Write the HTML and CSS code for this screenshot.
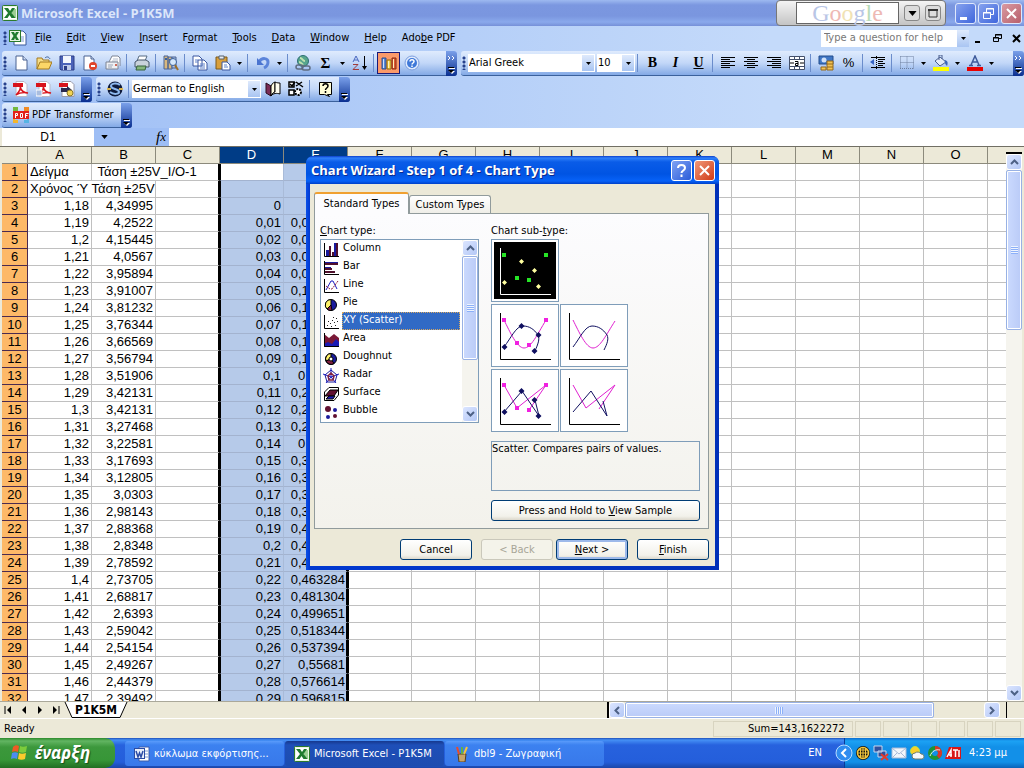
FILE: index.html
```html
<!DOCTYPE html>
<html lang="en">
<head>
    <meta charset="UTF-8">
    <meta name="viewport" content="width=device-width, initial-scale=1.0">
    <title>Microsoft Excel - P1K5M</title>
    <link rel="stylesheet" href="styles.css">
</head>
<body>

<svg class="defs" aria-hidden="true">
    <symbol id="excel" viewBox="0 0 16 16">
        <rect x=".5" y=".5" width="15" height="15" rx="1" fill="#e9f6e4" stroke="#2c7a2c"/>
        <path d="M2 2h12v12H2z" fill="#fff"/>
        <path d="M10 4h4v9h-4z" fill="#9ccf94"/>
        <path d="M2 3h4l2 3 2-3h3L9.500 8l4 5H9.500L7.500 10l-2 3H2l4-5z" fill="#1f7a2e"/>
    </symbol>
    <symbol id="arrow" viewBox="0 0 5 3"><path d="M0 0h5L2.500 3z" fill="#000"/></symbol>
    <symbol id="cap" viewBox="0 0 11 24">
        <path d="M3 16.500h6" stroke="#fff"/><path d="M3 19h6l-3 3z" fill="#fff"/>
        <path d="M2 15.500h6" stroke="#000"/><path d="M2 18h6l-3 3z" fill="#000"/>
    </symbol>
    <symbol id="chevrons" viewBox="0 0 11 6"><path d="M2 1l2 2-2 2M6 1l2 2-2 2" fill="none" stroke="#fff"/></symbol>
    <symbol id="up" viewBox="0 0 9 6"><path d="M1 5l3.500-3.500L8 5" fill="none" stroke="#4d6185" stroke-width="2"/></symbol>
    <symbol id="down" viewBox="0 0 9 6"><path d="M1 1l3.500 3.500L8 1" fill="none" stroke="#4d6185" stroke-width="2"/></symbol>
    <symbol id="left" viewBox="0 0 6 9"><path d="M5 1L1.500 4.500 5 8" fill="none" stroke="#4d6185" stroke-width="2"/></symbol>
    <symbol id="right" viewBox="0 0 6 9"><path d="M1 1l3.500 3.500L1 8" fill="none" stroke="#4d6185" stroke-width="2"/></symbol>
    <symbol id="pdf" viewBox="0 0 16 16">
        <path d="M3 .5h8l3 3v12H3z" fill="#fff" stroke="#b9b9c6"/>
        <path d="M0 2h10v4H0z" fill="#d8141c"/>
        <path d="M3 14c3-3 5-7 4-9 1 5 4 7 8 7-5-1-9 0-12 2z" fill="none" stroke="#d8141c" stroke-width="1.500"/>
    </symbol>
</svg>

<header class="titlebar">
    <svg class="ico"><use href="#excel"/></svg>
    <h1>Microsoft Excel - P1K5M</h1>
    <div class="google">
        <span class="google-logo"><b class="g-blue">G</b><b class="g-red">o</b><b class="g-gold">o</b><b class="g-blue">g</b><b class="g-green">l</b><b class="g-red">e</b></span>
        <button type="button" aria-label="Options"><svg width="9" height="5" viewBox="0 0 5 3"><use href="#arrow"/></svg></button>
        <button type="button" aria-label="Expand"><svg width="10" height="10"><path d="M1 2h8v7H1z" fill="none" stroke="#333"/><path d="M0 1h10v2H0z" fill="#333"/></svg></button>
    </div>
    <div class="win-buttons">
        <button type="button" class="win" aria-label="Minimize"><svg width="19" height="19"><path d="M4 13h7v3H4z" fill="#fff"/></svg></button>
        <button type="button" class="win" aria-label="Restore"><svg width="19" height="19"><path d="M7.500 8V4.500h7v6H12M4.500 8.500h7v6h-7zM7 5h8M4 9h8" fill="none" stroke="#fff"/></svg></button>
        <button type="button" class="win close" aria-label="Close"><svg width="19" height="19"><path d="M5 5l9 9M14 5l-9 9" stroke="#fff" stroke-width="2"/></svg></button>
    </div>
</header>

<nav class="menubar">
    <span class="grip"></span>
    <svg class="doc-ico" viewBox="0 0 18 16"><path d="M5 1h9l3 3v11H5z" fill="#fff" stroke="#38599c"/><path d="M11 7h4M11 9h4M11 11h4" stroke="#7f9bd0"/><rect x=".5" y=".5" width="11" height="11" fill="#e9f6e4" stroke="#2c7a2c"/><path d="M2 2h3l1 2 1-2h3L7.500 6 10 10H7L6 8l-1 2H2l2.500-4z" fill="#1f7a2e"/></svg>
    <a href="#"><u>F</u>ile</a>
    <a href="#"><u>E</u>dit</a>
    <a href="#"><u>V</u>iew</a>
    <a href="#"><u>I</u>nsert</a>
    <a href="#">F<u>o</u>rmat</a>
    <a href="#"><u>T</u>ools</a>
    <a href="#"><u>D</u>ata</a>
    <a href="#"><u>W</u>indow</a>
    <a href="#"><u>H</u>elp</a>
    <a href="#">Ado<u>b</u>e PDF</a>
    <div class="ask">
        <input type="text" aria-label="Help question" placeholder="Type a question for help">
        <button type="button" class="drop" aria-label="Recent questions"><svg class="arr"><use href="#arrow"/></svg></button>
    </div>
    <div class="doc-buttons">
        <button type="button" aria-label="Minimize workbook"><svg width="9" height="9"><path d="M1 7h5v2H1z"/></svg></button>
        <button type="button" aria-label="Restore workbook"><svg width="9" height="9"><path d="M2.500 3V.5h6v4H6M.5 3.500h5v4h-5zM2 1h7M0 4h6" fill="none" stroke="#000"/></svg></button>
        <button type="button" aria-label="Close workbook"><svg width="9" height="9"><path d="M1 1l7 7M8 1L1 8" stroke="#000" stroke-width="2"/></svg></button>
    </div>
</nav>

<div class="toolbars">
    <div class="bar-row">
        <div class="bar">
            <span class="grip"></span>
            <button type="button" class="tb" aria-label="New"><svg class="ico" viewBox="0 0 16 16"><path d="M3 1h7l4 4v10H3z" fill="#fff" stroke="#4a6392"/><path d="M10 1v4h4" fill="#cfdcf3" stroke="#4a6392"/></svg></button>
            <button type="button" class="tb" aria-label="Open"><svg class="ico" viewBox="0 0 16 16"><path d="M1 3h5l1 2h6v3H5l-4 6z" fill="#f5dd88" stroke="#a47a20"/><path d="M4 7h12l-3 7H1z" fill="#fbd667" stroke="#a47a20"/><path d="M9 3c2-2 4-1 5 1" fill="none" stroke="#3b619c"/></svg></button>
            <button type="button" class="tb" aria-label="Save"><svg class="ico" viewBox="0 0 16 16"><path d="M1 1h14v14H2l-1-1z" fill="#4b62b8" stroke="#2c3c86"/><path d="M4 1h8v7H4z" fill="#f3f6fd"/><path d="M4 10h8v5H4z" fill="#c0cbe8"/><path d="M5 11h3v4H5z" fill="#2c3c86"/></svg></button>
            <button type="button" class="tb" aria-label="Permission"><svg class="ico" viewBox="0 0 16 16"><path d="M2 1h7l3 3v11H2z" fill="#fff" stroke="#4a6392"/><path d="M9 1v3h3" fill="#cfdcf3" stroke="#4a6392"/><circle cx="11" cy="11" r="4" fill="#e0442a"/><path d="M9 11h4" stroke="#fff" stroke-width="2"/></svg></button>
            <button type="button" class="tb" aria-label="E-mail"><svg class="ico" viewBox="0 0 16 16"><path d="M4 7l3-6h6l2 2v8" fill="#fff" stroke="#7c8494"/><path d="M8 4h5M7 6h6" stroke="#b4bccb"/><path d="M1 7h12v7H1z" fill="#eef0f4" stroke="#7c8494"/><path d="M3 10h5M3 12h4" stroke="#9aa3b4"/><path d="M10 9h2v2h-2z" fill="#d06a5a"/></svg></button>
            <span class="sep"></span>
            <button type="button" class="tb" aria-label="Print"><svg class="ico" viewBox="0 0 16 16"><path d="M5 1h8l-2 5H3z" fill="#fff" stroke="#586d84"/><path d="M1 7l3-2h8l3 2v5H1z" fill="#c9d2dc" stroke="#47566b"/><path d="M3 11h9l-1 4H2z" fill="#85b67c" stroke="#37623d"/></svg></button>
            <span class="sep"></span>
            <button type="button" class="tb" aria-label="Research"><svg class="ico" viewBox="0 0 16 16"><path d="M1 1h4v13H1zM5 2h4v12H5z" fill="#d9b87e" stroke="#4a6392"/><path d="M9 2h4v11H9z" fill="#a9c0e6" stroke="#4a6392"/><path d="M2 4h2M6 5h2" stroke="#3b619c" stroke-width="2"/><circle cx="10" cy="7" r="3.500" fill="#d5e8fb" stroke="#3b619c"/><path d="M12 10l3 5" stroke="#9c6f29" stroke-width="2"/></svg></button>
            <span class="sep"></span>
            <button type="button" class="tb" aria-label="Copy"><svg class="ico" viewBox="0 0 16 16"><path d="M1 1h6l3 3v7H1zM6 5h6l3 3v7H6z" fill="#fff" stroke="#3b57a0"/><path d="M3 5h3M3 7h3M8 9h5M8 11h5M8 13h5" stroke="#5e80c8"/></svg></button>
            <button type="button" class="tb" aria-label="Paste"><svg class="ico" viewBox="0 0 16 16"><path d="M1 2h11v12H1z" fill="#d99f3b" stroke="#7c5a1d"/><path d="M4 1h5v3H4z" fill="#e9edf3" stroke="#55606f"/><path d="M7 7h5l3 3v5H7z" fill="#fff" stroke="#3b57a0"/><path d="M9 10h3M9 12h4" stroke="#5e80c8"/></svg></button>
            <button type="button" class="more" aria-label="Paste options"><svg class="arr"><use href="#arrow"/></svg></button>
            <span class="sep"></span>
            <button type="button" class="tb" aria-label="Undo"><svg class="ico" viewBox="0 0 16 16"><path d="M4 7c3-5 9-4 9 0 0 3-2 5-4 6" fill="none" stroke="#5b84da" stroke-width="3"/><path d="M2 3v7h7z" fill="#4a74d0"/></svg></button>
            <button type="button" class="more" aria-label="Undo list"><svg class="arr"><use href="#arrow"/></svg></button>
            <span class="sep"></span>
            <button type="button" class="tb" aria-label="Hyperlink"><svg class="ico" viewBox="0 0 16 16"><circle cx="8" cy="6" r="5.500" fill="#57a58c" stroke="#2d6f72"/><path d="M5 3c3 0 2 3 5 3M4 7c2 0 3 2 4 3" fill="none" stroke="#bfe2b0" stroke-width="2"/><rect x="1" y="10" width="7" height="4" rx="2" fill="none" stroke="#5f6c80" stroke-width="1.500"/><rect x="7" y="11" width="8" height="4" rx="2" fill="none" stroke="#5f6c80" stroke-width="1.500"/></svg></button>
            <button type="button" class="tb sigma" aria-label="AutoSum">Σ</button>
            <button type="button" class="more" aria-label="AutoSum list"><svg class="arr"><use href="#arrow"/></svg></button>
            <button type="button" class="tb" aria-label="Sort ascending"><svg class="ico" viewBox="0 0 16 16"><path d="M1 7l3-6 3 6M2 5h4" fill="none" stroke="#4a68c0"/><path d="M1 9.500h5l-5 5h6" fill="none" stroke="#a03a3a"/><path d="M12.500 1v11" stroke="#000"/><path d="M10 11h5l-2.500 4z"/></svg></button>
            <span class="sep"></span>
            <button type="button" class="tb pressed" aria-label="Chart Wizard"><svg class="ico" viewBox="0 0 16 16"><path d="M1 3h4v11H1z" fill="#5b89d8" stroke="#2d4d8f"/><path d="M2 4h1v9H2z" fill="#cfe0fa"/><path d="M6 5h4v9H6z" fill="#f8d34c" stroke="#8e6b12"/><path d="M11 3h4v11h-4z" fill="#df5a32" stroke="#862a12"/><path d="M7 6h1v7H7zM12 4h1v9h-1z" fill="#fdf0b8"/></svg></button>
            <button type="button" class="tb" aria-label="Help"><svg class="ico" viewBox="0 0 16 16"><circle cx="8" cy="8" r="7" fill="#dfeafd" stroke="#7c9ede"/><circle cx="8" cy="8" r="5" fill="#3f78d8"/><path d="M6 6.500c0-2.500 4-2.500 4 0 0 1.500-2 1.500-2 3M8 10.500v1.500" fill="none" stroke="#fff" stroke-width="1.500"/></svg></button>
            <button type="button" class="cap far" aria-label="Toolbar options"><svg class="cap-top"><use href="#chevrons"/></svg><svg class="cap-ico"><use href="#cap"/></svg></button>
        </div>
        <div class="bar grow">
            <span class="grip"></span>
            <div class="combo font-name"><input type="text" aria-label="Font" value="Arial Greek"><button type="button" class="drop" aria-label="Fonts"><svg class="arr"><use href="#arrow"/></svg></button></div>
            <div class="combo font-size"><input type="text" aria-label="Font size" value="10"><button type="button" class="drop" aria-label="Sizes"><svg class="arr"><use href="#arrow"/></svg></button></div>
            <span class="sep"></span>
            <button type="button" class="tb serif">B</button>
            <button type="button" class="tb serif"><i>I</i></button>
            <button type="button" class="tb serif"><u>U</u></button>
            <span class="sep"></span>
            <button type="button" class="tb" aria-label="Align left"><svg class="ico" viewBox="0 0 16 16"><path d="M1 2.500h14M1 4.500h9M1 6.500h14M1 8.500h9M1 10.500h14M1 12.500h9" stroke="#000"/></svg></button>
            <button type="button" class="tb" aria-label="Center"><svg class="ico" viewBox="0 0 16 16"><path d="M1 2.500h14M4 4.500h8M1 6.500h14M4 8.500h8M1 10.500h14M4 12.500h8" stroke="#000"/></svg></button>
            <button type="button" class="tb" aria-label="Align right"><svg class="ico" viewBox="0 0 16 16"><path d="M1 2.500h14M6 4.500h9M1 6.500h14M6 8.500h9M1 10.500h14M6 12.500h9" stroke="#000"/></svg></button>
            <button type="button" class="tb" aria-label="Merge and center"><svg class="ico" viewBox="0 0 16 16"><path d="M.5 1.500h15v13H.5zM.5 4.500h15M.5 11.500h15M5.500 1.500v3M10.500 1.500v3M5.500 11.500v3M10.500 11.500v3" fill="#fff" stroke="#44506b"/><path d="M1 8h4M15 8h-4" stroke="#000"/><path d="M6 6.500h3v4H6.500v-2H9" fill="none" stroke="#000"/></svg></button>
            <span class="sep"></span>
            <button type="button" class="tb" aria-label="Currency"><svg class="ico" viewBox="0 0 16 16"><path d="M1 1h14v8H1z" fill="#3f76c4" stroke="#234d8d"/><circle cx="6" cy="5" r="2.500" fill="#cfe0f8"/><path d="M9 6h6v9H9z" fill="#f3c352" stroke="#94681a"/><path d="M9 9h6M9 12h6" stroke="#94681a"/><path d="M3 12h5v3H3z" fill="#f3c352" stroke="#94681a"/></svg></button>
            <button type="button" class="tb percent" aria-label="Percent">%</button>
            <span class="sep"></span>
            <button type="button" class="tb" aria-label="Increase indent"><svg class="ico" viewBox="0 0 16 16"><path d="M1 2.500h14M8 4.500h7M8 6.500h5M8 8.500h7M8 10.500h5M1 12.500h14" stroke="#000"/><path d="M6.500 1v14" stroke="#000" stroke-dasharray="1 1"/><path d="M4 4v6L0 7z" fill="#3563c4"/></svg></button>
            <span class="sep"></span>
            <button type="button" class="tb" aria-label="Borders"><svg class="ico" viewBox="0 0 16 16"><path d="M1.500 1.500h13v12M1.500 1.500v12M8 1.500v12M1.500 7.500h13" fill="none" stroke="#6d7f9e" stroke-dasharray="1 1"/><path d="M1 13.500h14" stroke="#6d7f9e" stroke-dasharray="1 1"/></svg></button>
            <button type="button" class="more" aria-label="Border styles"><svg class="arr"><use href="#arrow"/></svg></button>
            <button type="button" class="tb" aria-label="Fill color"><svg class="ico" viewBox="0 0 16 16"><path d="M2 6l5-4 6 5-6 4z" fill="#e3ebf8" stroke="#4a5f8f"/><path d="M6 5V0h3v4" fill="none" stroke="#4a5f8f"/><path d="M12 5c3 1 3 3 2 6-1-1-3-3-2-6z" fill="#3d66b9"/><path d="M0 12h16v4H0z" fill="#ff0"/></svg></button>
            <button type="button" class="more" aria-label="Fill colors"><svg class="arr"><use href="#arrow"/></svg></button>
            <button type="button" class="tb" aria-label="Font color"><svg class="ico" viewBox="0 0 16 16"><path d="M4 10L8 1l4 9M5 7h6M2 10.500h4M10 10.500h4" fill="none" stroke="#3e5a9a" stroke-width="1.500"/><path d="M0 12h16v4H0z" fill="#e80000"/></svg></button>
            <button type="button" class="more" aria-label="Font colors"><svg class="arr"><use href="#arrow"/></svg></button>
            <button type="button" class="cap end" aria-label="Toolbar options"><svg class="cap-top"><use href="#chevrons"/></svg><svg class="cap-ico"><use href="#cap"/></svg></button>
        </div>
    </div>
    <div class="bar-row">
        <div class="bar">
            <span class="grip"></span>
            <button type="button" class="tb" aria-label="Convert to PDF"><svg class="ico"><use href="#pdf"/></svg></button>
            <button type="button" class="tb" aria-label="Convert and e-mail"><svg class="ico" viewBox="0 0 16 16"><use href="#pdf"/><path d="M0 9h6v6H0z" fill="#a9bddf" stroke="#fff"/></svg></button>
            <button type="button" class="tb" aria-label="Convert and review"><svg class="ico" viewBox="0 0 16 16"><path d="M3 .5h9l3 3v12H3z" fill="#fff" stroke="#9a9aa8"/><path d="M0 2h9v4H0z" fill="#d8141c"/><path d="M2 7h6V5l5 4-5 4v-2H2z" fill="#29294e"/><circle cx="11" cy="12" r="3" fill="#f3d455" stroke="#8a7a2a"/></svg></button>
            <button type="button" class="cap near" aria-label="Toolbar options"><svg class="cap-ico"><use href="#cap"/></svg></button>
        </div>
        <div class="bar">
            <span class="grip"></span>
            <button type="button" class="tb" aria-label="Translate"><svg class="ico" viewBox="0 0 16 16"><circle cx="8" cy="8" r="7.500" fill="#0d1a3c"/><path d="M13 4c-4-3-9-1-9 1 0 4 8 2 8 6 0 2-5 3-9 0" fill="none" stroke="#8db8ee" stroke-width="2"/><path d="M0 8h4M12 8h4" stroke="#d9b34c" stroke-width="2"/></svg></button>
            <span class="sep"></span>
            <div class="combo language"><input type="text" aria-label="Direction" value="German to English"><button type="button" class="drop" aria-label="Directions"><svg class="arr"><use href="#arrow"/></svg></button></div>
            <button type="button" class="tb" aria-label="Dictionary"><svg class="ico" viewBox="0 0 16 16"><path d="M1 2l5 3v10l-5-3z" fill="#7a2c55" stroke="#2a0d20"/><path d="M6 5c1-3 4-4 4-4v10s-3 1-4 4z" fill="#fffce0" stroke="#000"/><path d="M10 1c2 1 4 1 5 1v11c-3-1-7-1-9 2 1-3 4-4 4-4z" fill="#fffef0" stroke="#000"/></svg></button>
            <button type="button" class="tb" aria-label="Options"><svg class="ico" viewBox="0 0 16 16"><path d="M1 1h5v5H1zM1 9h5v5H1z" fill="#fff" stroke="#000" stroke-width="1.500"/><path d="M2 3l2 2 3-4M8 5l6-4M8 1l7 5" fill="none" stroke="#000" stroke-width="1.500"/><circle cx="10" cy="11" r="3" fill="#fff" stroke="#000" stroke-width="2" stroke-dasharray="2 1"/></svg></button>
            <span class="sep"></span>
            <button type="button" class="tb" aria-label="Context help"><svg class="ico" viewBox="0 0 16 16"><path d="M2.500 1.500h12v12h-4l2 2-5-2h-5z" fill="#fffdd6" stroke="#000"/><path d="M6 5c0-3 5-3 5 0 0 2-2.500 2-2.500 4M8.500 10v2" fill="none" stroke="#000" stroke-width="1.500"/></svg></button>
            <button type="button" class="cap near" aria-label="Toolbar options"><svg class="cap-ico"><use href="#cap"/></svg></button>
        </div>
    </div>
    <div class="bar-row">
        <div class="bar">
            <span class="grip"></span>
            <button type="button" class="tb-text"><svg class="ico" viewBox="0 0 16 16"><path d="M0 0h5v4H2v2H0z" fill="#74b83c"/><path d="M11 0h5v6h-2V4h-3z" fill="#f08a24"/><path d="M0 11h2v2h3v3H0z" fill="#f3b52c"/><path d="M14 11h2v5h-5v-3h3z" fill="#56b4e4"/><rect y="4" width="16" height="8" fill="#e32119"/><path d="M2.500 11V6.500h2v2h-2M7.500 6.500v4h2v-4zM12.500 11V6.500h3M12.500 8.500h2" fill="none" stroke="#fff"/></svg>PDF Transformer</button>
            <button type="button" class="cap near" aria-label="Toolbar options"><svg class="cap-ico"><use href="#cap"/></svg></button>
        </div>
    </div>
</div>

<div class="formula-bar">
    <input type="text" class="name-box" aria-label="Name box" value="D1">
    <button type="button" class="name-drop" aria-label="Names"><svg width="7" height="4" viewBox="0 0 5 3"><use href="#arrow"/></svg></button>
    <button type="button" class="fx" aria-label="Insert function">f<small>x</small></button>
    <input type="text" class="formula" aria-label="Formula">
</div>

<main class="workspace">
    <div class="sheet" id="sheet">
        <table id="grid"></table>
    </div>
    <div class="vscroll">
        <span class="split"></span>
        <button type="button" class="sb" aria-label="Scroll up"><svg width="9" height="6"><use href="#up"/></svg></button>
        <div class="track"><div class="thumb"></div></div>
        <button type="button" class="sb" aria-label="Scroll down"><svg width="9" height="6"><use href="#down"/></svg></button>
    </div>

    <section class="dialog" role="dialog" aria-labelledby="wizard-title">
        <div class="dialog-title">
            <h2 id="wizard-title">Chart Wizard - Step 1 of 4 - Chart Type</h2>
            <button type="button" class="dlg-btn" aria-label="Help"><svg width="19" height="19"><path d="M6 7c0-4 7-4 7 0 0 2.500-3.500 2.500-3.500 5M9.500 13.500v2.500" fill="none" stroke="#fff" stroke-width="2"/></svg></button>
            <button type="button" class="dlg-btn red" aria-label="Close"><svg width="19" height="19"><path d="M5 5l9 9M14 5l-9 9" stroke="#fff" stroke-width="2"/></svg></button>
        </div>
        <div class="dialog-body">
            <div class="tabs" role="tablist">
                <button type="button" class="tab active" role="tab">Standard Types</button>
                <button type="button" class="tab" role="tab">Custom Types</button>
            </div>
            <div class="panel">
                <div class="col-types">
                    <p class="caption"><u>C</u>hart type:</p>
                    <div class="listbox">
                        <div class="types">
                            <label><input type="radio" name="type"><svg class="ico" viewBox="0 0 16 16"><path d="M1.500 1v13.500H16" fill="none" stroke="#000"/><path d="M3 8h3v6H3zM11 1h2v13h-2z" fill="#1a1a9c"/><path d="M6 4h2v10H6zM9 10h2v4H9zM13 1h2v13h-2z" fill="#50102c"/></svg><span>Column</span></label>
                            <label><input type="radio" name="type"><svg class="ico" viewBox="0 0 16 16"><path d="M1.500 1v13.500H16" fill="none" stroke="#000"/><path d="M2 2h13v2H2zM2 7h6v2H2zM2 11h9v1H2z" fill="#1a1a9c"/><path d="M2 3h13v2H2zM2 8h7v2H2zM2 11h10v2H2z" fill="#50102c"/></svg><span>Bar</span></label>
                            <label><input type="radio" name="type"><svg class="ico" viewBox="0 0 16 16"><path d="M1.500 1v13.500H16" fill="none" stroke="#000"/><path d="M3 12l5-9h2l4 8" fill="none" stroke="#1a1ac0"/><path d="M3 8l4 3h2l6-8" fill="none" stroke="#902040" stroke-dasharray="2 1"/></svg><span>Line</span></label>
                            <label><input type="radio" name="type"><svg class="ico" viewBox="0 0 16 16"><circle cx="8" cy="9" r="5.500" fill="#1a1a9c" stroke="#000"/><path d="M8 9V3.500A5.500 5.500 0 0 0 4 13z" fill="#fff36a" stroke="#000"/><path d="M8 9l-4 4a5.500 5.500 0 0 0 5 1.500z" fill="#802040" stroke="#000"/></svg><span>Pie</span></label>
                            <label><input type="radio" name="type" checked><svg class="ico" viewBox="0 0 16 16"><path d="M1.500 1v13.500H16" fill="none" stroke="#000"/><path d="M4 11.500h1M5 7.500h1M7 9.500h1M9 6.500h1M11 8.500h1M13 4.500h1M8 12.500h1M12 11.500h1M14 7.500h1M10 3.500h1" stroke="#222"/></svg><span>XY (Scatter)</span></label>
                            <label><input type="radio" name="type"><svg class="ico" viewBox="0 0 16 16"><path d="M1 2l5 4 5-4 5 4v9H1z" fill="#7a1836"/><path d="M1 12l4-2 4 2 4-5 3 3v5H1z" fill="#1a1ab4"/><path d="M1.500 1v13.500H16" fill="none" stroke="#000"/></svg><span>Area</span></label>
                            <label><input type="radio" name="type"><svg class="ico" viewBox="0 0 16 16"><circle cx="8" cy="9" r="5.500" fill="#1a1a9c" stroke="#000"/><path d="M8 9V3.500A5.500 5.500 0 0 0 3 11z" fill="#fff36a" stroke="#000"/><path d="M8 9l-5 2a5.500 5.500 0 0 0 8 2.500z" fill="#802040" stroke="#000"/><circle cx="8" cy="9" r="2" fill="#fff" stroke="#000"/></svg><span>Doughnut</span></label>
                            <label><input type="radio" name="type"><svg class="ico" viewBox="0 0 16 16"><path d="M8 2l6 5-2 7H4L2 7z" fill="#fff" stroke="#1a1a9c"/><path d="M8 0v9l8-3M8 9l5 6M8 9l-5 6M8 9L0 6" fill="none" stroke="#1a1ac0"/><path d="M8 5l3 3-1 4H6L5 8z" fill="none" stroke="#802040" stroke-width="1.500"/></svg><span>Radar</span></label>
                            <label><input type="radio" name="type"><svg class="ico" viewBox="0 0 16 16"><path d="M1.500 6L6 1.500h9.500V9L11 14.500H1.500z" fill="#fff" stroke="#000"/><path d="M2 10l5-6 8 0-4 6z" fill="#601030" stroke="#000"/><path d="M3 13l3-3h6l-2 3z" fill="#1a1ab4" stroke="#000"/></svg><span>Surface</span></label>
                            <label><input type="radio" name="type"><svg class="ico" viewBox="0 0 16 16"><circle cx="5" cy="5" r="3" fill="#601030"/><circle cx="12" cy="6" r="2" fill="#1a1a9c"/><circle cx="5" cy="13" r="2" fill="#1a1a9c"/><circle cx="12" cy="12" r="2" fill="#601030"/></svg><span>Bubble</span></label>
                        </div>
                        <div class="list-scroll">
                            <button type="button" class="sb" aria-label="Scroll up"><svg width="9" height="6"><use href="#up"/></svg></button>
                            <div class="track"><div class="thumb"></div></div>
                            <button type="button" class="sb" aria-label="Scroll down"><svg width="9" height="6"><use href="#down"/></svg></button>
                        </div>
                    </div>
                </div>
                <div class="col-sub">
                    <p class="caption">Chart sub-<u>t</u>ype:</p>
                    <div class="subtypes">
                        <label class="wide"><input type="radio" name="subtype" checked aria-label="Scatter"><svg viewBox="0 0 66 61"><path d="M2 2h62v57H2z" fill="#000"/><path d="M8.500 8v46.500H59" fill="none" stroke="#fff"/><path d="M10 13h4v4h-4zM52 13h4v4h-4zM23 36h4v4h-4zM35 38h4v4h-4z" fill="#26e426"/><path d="M29.500 19l2.500 2.500-2.500 2.500-2.500-2.500zM42.500 28l2.500 2.500-2.500 2.500-2.500-2.500zM12.500 40l2.500 2.500-2.500 2.500-2.500-2.500zM46.500 44l2.500 2.500-2.500 2.500-2.500-2.500z" fill="#ffffa0"/></svg></label>
                        <label><input type="radio" name="subtype" aria-label="Smoothed lines with markers"><svg viewBox="0 0 66 61"><path d="M8.500 8v46.500H59" fill="none" stroke="#000"/><path d="M12 15C18 27 25 43 32 43S45 30 54 15" fill="none" stroke="#e020d0"/><path d="M12 42c7-9 12-21 19-21 6 0 11 3 15 9 2 4 0 9-3 16" fill="none" stroke="#101060"/><path d="M10 13h4v4h-4zM52 13h4v4h-4zM23 36h4v4h-4zM35 38h4v4h-4z" fill="#f020e0"/><path d="M29.500 18l3 3-3 3-3-3zM46.500 27l3 3-3 3-3-3zM12.500 39l3 3-3 3-3-3zM42.500 43l3 3-3 3-3-3z" fill="#101060"/></svg></label>
                        <label><input type="radio" name="subtype" aria-label="Smoothed lines"><svg viewBox="0 0 66 61"><path d="M8.500 8v46.500H59" fill="none" stroke="#000"/><path d="M12 15C18 27 25 43 32 43S45 30 54 16" fill="none" stroke="#e020d0"/><path d="M12 42c7-9 12-21 19-21 6 0 11 3 15 9 2 4 0 9-3 15" fill="none" stroke="#101060"/></svg></label>
                        <label><input type="radio" name="subtype" aria-label="Straight lines with markers"><svg viewBox="0 0 66 61"><path d="M8.500 8v46.500H59" fill="none" stroke="#000"/><path d="M12 15l13 23 29-23-17 25" fill="none" stroke="#e020d0"/><path d="M12 42l18-21 17 25-4-16" fill="none" stroke="#101060"/><path d="M10 13h4v4h-4zM52 13h4v4h-4zM23 36h4v4h-4zM35 38h4v4h-4z" fill="#f020e0"/><path d="M29.500 18l3 3-3 3-3-3zM42.500 27l3 3-3 3-3-3zM12.500 39l3 3-3 3-3-3zM46.500 43l3 3-3 3-3-3z" fill="#101060"/></svg></label>
                        <label><input type="radio" name="subtype" aria-label="Straight lines"><svg viewBox="0 0 66 61"><path d="M8.500 8v46.500H59" fill="none" stroke="#000"/><path d="M12 15l13 23 29-23-16 24" fill="none" stroke="#e020d0"/><path d="M12 42l18-21 16 25-4-15" fill="none" stroke="#101060"/></svg></label>
                    </div>
                    <p class="description">Scatter. Compares pairs of values.</p>
                    <button type="button" class="btn full"><span>Press and Hold to <u>V</u>iew Sample</span></button>
                </div>
            </div>
            <div class="actions">
                <button type="button" class="btn">Cancel</button>
                <button type="button" class="btn back" disabled>&lt; Back</button>
                <button type="button" class="btn default"><span><u>N</u>ext &gt;</span></button>
                <button type="button" class="btn"><span><u>F</u>inish</span></button>
            </div>
        </div>
    </section>
</main>

<div class="sheet-tabs">
    <div class="tab-side">
        <button type="button" class="nav" aria-label="First sheet"><svg width="8" height="8"><path d="M1 0v8" stroke="#000"/><path d="M7 0v8L3 4z"/></svg></button>
        <button type="button" class="nav" aria-label="Previous sheet"><svg width="8" height="8"><path d="M6 0v8L2 4z"/></svg></button>
        <button type="button" class="nav" aria-label="Next sheet"><svg width="8" height="8"><path d="M2 0v8l4-4z"/></svg></button>
        <button type="button" class="nav" aria-label="Last sheet"><svg width="8" height="8"><path d="M7 0v8" stroke="#000"/><path d="M1 0v8l4-4z"/></svg></button>
        <button type="button" class="sheet-tab"><svg width="64" height="16"><path d="M1 0l7 15.500h48L63 0" fill="#fff" stroke="#000"/></svg><span>P1K5M</span></button>
    </div>
    <div class="hscroll">
        <button type="button" class="sb" aria-label="Scroll left"><svg width="6" height="9"><use href="#left"/></svg></button>
        <div class="track"><div class="thumb"></div></div>
        <button type="button" class="sb" aria-label="Scroll right"><svg width="6" height="9"><use href="#right"/></svg></button>
    </div>
    <span class="corner"></span>
</div>

<div class="status">
    <span class="ready">Ready</span>
    <span class="pane sum">Sum=143,1622272</span>
    <span class="pane"></span>
    <span class="pane"></span>
    <span class="pane"></span>
    <span class="pane"></span>
    <span class="pane"></span>
    <span class="pane"></span>
</div>

<footer class="taskbar">
    <button type="button" class="start"><svg width="18" height="18" viewBox="0 0 18 18"><path d="M2 3c2-2 4-2 6-1L7 8C5 7 3 7 1 8z" fill="#ee5a24"/><path d="M9 2c2 1 4 1 7 0l-1 6c-2 1-5 1-7 0z" fill="#7ccb3c"/><path d="M1 9c2-1 4-1 6 0l-1 6c-2-1-4-1-6 0z" fill="#4c8cf0"/><path d="M8 9c2 1 4 1 7 0l-1 6c-2 1-5 1-7 0z" fill="#fccb2c"/></svg>έναρξη</button>
    <div class="tasks">
        <button type="button" class="task"><svg class="ico" viewBox="0 0 16 16"><path d="M5 1h10v14H5z" fill="#fff" stroke="#3c5dab"/><path d="M10 5h4M10 8h4M10 11h4" stroke="#7f9bd0"/><rect x=".5" y="2.500" width="10" height="10" fill="#e8effc" stroke="#2b4ca5"/><path d="M2 5l2 6 1.500-4L7 11l2-6" fill="none" stroke="#2b4ca5" stroke-width="1.500"/></svg>κύκλωμα εκφόρτισης...</button>
        <button type="button" class="task current"><svg class="ico"><use href="#excel"/></svg>Microsoft Excel - P1K5M</button>
        <button type="button" class="task"><svg class="ico" viewBox="0 0 16 16"><path d="M4 8h8l-1 8H5z" fill="#c8a46a" stroke="#5a3d1c"/><path d="M5 8L3 1" stroke="#e84c2c" stroke-width="2"/><path d="M8 8V1" stroke="#60b04c" stroke-width="2"/><path d="M10 8l3-7" stroke="#f5c23c" stroke-width="2"/></svg>dbl9 - Ζωγραφική</button>
    </div>
    <span class="lang">EN</span>
    <div class="tray">
        <button type="button" class="tray-toggle" aria-label="Show hidden icons"><svg width="18" height="18"><circle cx="9" cy="9" r="8" fill="#2f8df0" stroke="#b8dcff"/><path d="M11 5L7 9l4 4" fill="none" stroke="#fff" stroke-width="2"/></svg></button>
        <svg class="ico" viewBox="0 0 16 16"><circle cx="8" cy="8" r="7" fill="#111"/><circle cx="8" cy="8" r="5.500" fill="none" stroke="#f1c53c" stroke-width="1.500"/><path d="M8 2v12M2 8h12M3 5h10M3 11h10M5.500 3v10M10.500 3v10" stroke="#f1c53c"/></svg>
        <svg class="ico" viewBox="0 0 16 16"><path d="M1 1h8v6H1zM5 6h8v6H5z" fill="#31509c" stroke="#c8d6ee"/><path d="M8 9l7 6M15 9l-7 6" stroke="#e03a2c" stroke-width="2"/></svg>
        <svg class="ico" viewBox="0 0 16 16"><path d="M1 3h14v10H1z" fill="#f3f6fb" stroke="#a7b9d6"/><path d="M1 3l7 6 7-6M1 13l5-5M15 13l-5-5" fill="none" stroke="#a7b9d6"/></svg>
        <svg class="ico" viewBox="0 0 16 16"><circle cx="6" cy="6" r="4.500" fill="#f8cf2a" stroke="#b2e04c"/><path d="M6 14a3 3 0 0 1 0-6 4 4 0 0 1 6 1 2.500 2.500 0 0 1 1 5z" fill="#f4f7fa" stroke="#6a7c70"/></svg>
        <svg class="ico" viewBox="0 0 16 16"><circle cx="8" cy="8" r="5" fill="none" stroke="#1d9434" stroke-width="4"/><path d="M8 3a5 5 0 0 1 3 9" fill="none" stroke="#d5382c" stroke-width="4"/><path d="M3 11c2-5 6-7 10-6" fill="none" stroke="#e9f4e4"/></svg>
        <svg class="ico" viewBox="0 0 16 16"><path d="M4 2h12v12H0z" fill="#d81818"/><path d="M2 12l4-7v7M4 10h3M8 5h5M10.500 5v7M14 5v7" fill="none" stroke="#fff" stroke-width="1.500"/></svg>
        <time>4:23 μμ</time>
    </div>
</footer>

<script src="script.js"></script>
</body>
</html>
```
FILE: styles.css
```css
* {
    box-sizing: border-box;
}

body {
    margin: 0;
    height: 100vh;
    display: flex;
    flex-direction: column;
    overflow: hidden;
    font: 11px/14px "DejaVu Sans Condensed", "Noto Sans", sans-serif;
    color: #000;
    background: #ece9d8;
}

button, input {
    font: inherit;
    color: inherit;
    margin: 0;
    padding: 0;
    border: 0;
    background: none;
}

button {
    display: flex;
    align-items: center;
    justify-content: center;
    flex: none;
}

input {
    min-width: 0;
}

svg {
    display: block;
    flex: none;
}

h1, h2, p {
    margin: 0;
}

.defs {
    position: absolute;
    width: 0;
    height: 0;
}

.ico {
    width: 16px;
    height: 16px;
}

.arr {
    width: 5px;
    height: 3px;
}

/* title bar */
.titlebar {
    display: flex;
    align-items: center;
    flex: none;
    height: 26px;
    padding: 0 2px;
    background: linear-gradient(#9db9f0, #7b97e0 5px, #7a96df 16px, #8aa9ec 22px, #7690d8);
}

.titlebar h1 {
    flex: 1;
    margin-left: 3px;
    font: bold 13px/18px "Open Sans", "Noto Sans", sans-serif;
    color: #dce6fa;
}

.google {
    display: flex;
    align-items: center;
    gap: 5px;
    width: 170px;
    height: 26px;
    padding-left: 19px;
    border: 1px solid #777;
    border-radius: 4px;
    background: linear-gradient(#f4f4f4, #c4c4c4);
}

.google-logo {
    width: 103px;
    height: 22px;
    border: 1px solid #666;
    background: #fff;
    font: 24px/20px "Liberation Serif", serif;
    text-align: center;
}

.google-logo b {
    font-weight: normal;
}

.g-blue { color: #b9c6e6; }
.g-red { color: #eeb9b4; }
.g-gold { color: #f1e2b4; }
.g-green { color: #b9dcb9; }

.google button {
    width: 16px;
    height: 16px;
    border: 1px solid #888;
    border-radius: 3px;
    background: #dcdcdc;
}

.win-buttons {
    display: flex;
    gap: 2px;
    margin-left: 9px;
}

.win {
    width: 21px;
    height: 21px;
    border: 1px solid #dfe8fc;
    border-radius: 3px;
    background: linear-gradient(135deg, #86a2ee, #3f66dc);
}

.win.close {
    background: linear-gradient(135deg, #d99aa2, #b8606c);
}

/* menu */
.menubar {
    display: flex;
    align-items: center;
    flex: none;
    gap: 15px;
    height: 24px;
    padding: 0 3px 0 2px;
    background: linear-gradient(90deg, #9ebef5, #c4dafa 75%);
}

.menubar a {
    color: #000;
    text-decoration: none;
}

.grip {
    flex: none;
    width: 7px;
    height: 14px;
    background: radial-gradient(circle at 3px 2px, #27418c 1px, transparent 2px) 0 0 / 7px 4px;
}

.menubar .grip {
    margin-right: -15px;
}

.doc-ico {
    width: 18px;
    height: 16px;
    margin-right: -7px;
}

.ask {
    display: flex;
    width: 148px;
    height: 17px;
    margin-left: auto;
    background: #fff;
}

.ask input {
    flex: 1;
    padding-left: 3px;
    color: #777;
}

.ask input::placeholder {
    color: #777;
}

.drop {
    width: 12px;
    background: linear-gradient(#dfeafc, #a9c5f2);
}

.doc-buttons {
    display: flex;
    gap: 10px;
    margin-left: -10px;
}

/* toolbars */
.toolbars {
    display: flex;
    flex-direction: column;
    flex: none;
    gap: 1px;
    padding: 1px 0 0 2px;
    background: linear-gradient(90deg, #9ebef5, #c4dafa 75%);
}

.bar-row {
    display: flex;
    gap: 4px;
    height: 25px;
}

.bar {
    display: flex;
    align-items: center;
    border-bottom: 1px solid #3b619c;
    border-radius: 3px;
    background: linear-gradient(#dfebfd, #c2d7f8 12px, #83a9e6);
}

.bar.grow {
    flex: 1;
}

.tb {
    width: 23px;
    height: 22px;
}

.tb.pressed {
    border: 1px solid #1a1a78;
    background: #fb9a6a;
}

.tb.sigma {
    font: bold 15px/20px "Liberation Serif", serif;
}

.tb.serif {
    font: bold 14px/20px "Liberation Serif", serif;
}

.tb.percent {
    font: 13px/20px "Liberation Sans", sans-serif;
}

.tb-text {
    gap: 3px;
    height: 22px;
    padding: 0 4px;
}

.more {
    width: 11px;
    height: 22px;
}

.sep {
    flex: none;
    width: 6px;
    height: 18px;
    background: linear-gradient(#6a8ccb, #6a8ccb) 2px 0 / 1px 100% no-repeat;
}

.cap {
    flex-direction: column;
    justify-content: flex-start;
    align-self: stretch;
    width: 11px;
    margin-bottom: -1px;
    border-radius: 0 3px 3px 0;
    background: linear-gradient(#7aa0ea, #0a2f90);
    position: relative;
}

.cap.near { margin-left: 3px; }
.cap.far { margin-left: 23px; }
.cap.end { margin-left: auto; }

.cap-top {
    width: 11px;
    height: 6px;
    margin-top: 4px;
}

.cap-ico {
    position: absolute;
    left: 0;
    bottom: 0;
    width: 11px;
    height: 24px;
}

.combo {
    display: flex;
    height: 18px;
    border: 1px solid #fff;
    background: #fff;
}

.combo input {
    flex: 1;
}

.font-name { width: 127px; margin-right: 2px; }
.font-size { width: 38px; }
.language { width: 129px; }

/* formula bar */
.formula-bar {
    display: flex;
    flex: none;
    height: 18px;
    margin-left: 2px;
    background: #9ebef5;
}

.name-box {
    width: 92px;
    background: #fff;
    font: 12px/16px "Liberation Sans", sans-serif;
    text-align: center;
}

.name-drop {
    width: 20px;
}

.fx {
    width: 55px;
    padding: 0 3px;
    justify-content: flex-end;
    font: italic 15px/16px "Liberation Serif", serif;
}

.fx small {
    font-size: 13px;
}

.formula {
    flex: 1;
    background: #fff;
}

/* sheet */
.workspace {
    position: relative;
    display: flex;
    flex: 1;
    min-height: 0;
    padding: 0 2px;
    border-top: 1px solid #716f64;
}

.sheet {
    flex: 1;
    overflow: hidden;
    background: #fff;
}

#grid {
    table-layout: fixed;
    border-collapse: separate;
    border-spacing: 0;
    font: 13px/16px "Liberation Sans", Arial, sans-serif;
}

#grid th, #grid td {
    width: 64px;
    height: 17px;
    padding: 0 2px;
    border-right: 1px solid #c0c0c0;
    border-bottom: 1px solid #c0c0c0;
    white-space: nowrap;
    text-align: right;
}

#grid th {
    padding: 0;
    font-weight: normal;
    text-align: center;
    background: #ece9d8;
    border-color: #8c8a7c;
}

#grid th:first-child {
    width: 26px;
}

#grid tbody th {
    background: #fdb968;
    border-color: #4a2a50;
}

#grid thead .sel {
    background: #003c86;
    color: #fff;
}

#grid td.text {
    text-align: left;
    white-space: pre;
}

#grid td.before,
#grid td.last {
    border-right: 2px solid #000;
}

#grid td.sel {
    background: #b6cae9;
    border-right-color: #a9bbd8;
    border-bottom-color: #a3b3cf;
}

#grid td.first,
#grid td.after {
    border-left: 1px solid #000;
}

#grid td.last {
    padding-right: 1px;
    border-right-color: #000;
}

#grid td.cursor {
    background: #fff;
}

/* scroll bars */
.vscroll, .list-scroll {
    display: flex;
    flex-direction: column;
    flex: none;
    width: 16px;
    background: #f5f4ee;
}

.split {
    height: 7px;
    border-bottom: 2px solid #000;
    background: #ece9d8;
}

.sb {
    width: 16px;
    height: 16px;
    border: 1px solid #fff;
    border-radius: 3px;
    background: linear-gradient(135deg, #dbe5ff, #b4c8f6);
}

.track {
    flex: 1;
    display: flex;
}

.thumb {
    border: 1px solid #98b1e4;
    border-radius: 2px;
    box-shadow: inset 0 0 0 1px #fff;
    background:
        repeating-linear-gradient(#eef4fe 0 1px, #8cb0f8 1px 2px) center / 7px 8px no-repeat,
        linear-gradient(90deg, #cbdafe, #bacbf7);
}

.vscroll .thumb {
    width: 16px;
    height: 31%;
}

.list-scroll .thumb {
    width: 16px;
    height: 69%;
}

.hscroll .thumb {
    width: 86%;
    height: 16px;
    background:
        repeating-linear-gradient(90deg, #eef4fe 0 1px, #8cb0f8 1px 2px) center / 8px 7px no-repeat,
        linear-gradient(#cbdafe, #bacbf7);
}

/* chart wizard */
.dialog {
    position: absolute;
    top: 9px;
    left: 306px;
    width: 413px;
    padding: 0 4px 4px;
    border-radius: 7px 7px 0 0;
    background: linear-gradient(90deg, #0a50e8, #0038d0 4px, #0030b8);
}

.dialog-title {
    display: flex;
    align-items: center;
    gap: 2px;
    height: 28px;
    margin: 0 -4px;
    padding: 0 4px 0 5px;
    border-radius: 7px 7px 0 0;
    background: linear-gradient(#0a3ecb, #2f80fa 2px, #0a5ce8 6px, #0054e3 18px, #0762f8 25px, #0040c8);
}

.dialog-title h2 {
    flex: 1;
    font: bold 13px/18px "Open Sans", "Noto Sans", sans-serif;
    color: #fff;
    text-shadow: 1px 1px #0a2a90;
}

.dlg-btn {
    width: 21px;
    height: 21px;
    border: 1px solid #fff;
    border-radius: 3px;
    background: linear-gradient(135deg, #7fa2f4, #2a5cd8);
}

.dlg-btn.red {
    background: linear-gradient(135deg, #f09878, #d03c18);
}

.dialog-body {
    padding: 8px 6px 6px 4px;
    background: #ece9d8;
}

.tabs {
    display: flex;
    align-items: flex-end;
    height: 21px;
}

.tab {
    width: 82px;
    height: 18px;
    border: 1px solid #919b9c;
    border-bottom: 0;
    border-radius: 3px 3px 0 0;
    background: linear-gradient(#fff, #efeee8);
}

.tab.active {
    position: relative;
    width: 95px;
    height: 22px;
    margin-bottom: -1px;
    border-top: 2px solid #f0a030;
    background: #fcfcfe;
}

.panel {
    display: flex;
    gap: 12px;
    padding: 10px 8px 7px 5px;
    border: 1px solid #919b9c;
    background: linear-gradient(#fcfcfe, #f3f2ec);
}

.col-types {
    width: 159px;
}

.col-sub {
    flex: 1;
}

.caption {
    height: 15px;
}

.listbox {
    display: flex;
    height: 184px;
    border: 1px solid #7f9db9;
    background: #fff;
}

.types {
    flex: 1;
    padding: 0 2px;
}

.types label {
    display: flex;
    align-items: flex-end;
    gap: 3px;
    height: 18px;
}

.types span {
    flex: 1;
    height: 18px;
    padding-left: 1px;
    line-height: 16px;
}

.types input, .subtypes input {
    position: absolute;
    opacity: 0;
}

.types input:checked ~ span {
    background: #316ac5;
    color: #fff;
    outline: 1px dotted #d8a860;
    outline-offset: -1px;
}

.subtypes {
    display: grid;
    grid-template-columns: 68px 68px;
    gap: 2px 1px;
}

.subtypes label {
    height: 63px;
    border: 1px solid #7f9db9;
    background: #fff;
}

.subtypes .wide,
.subtypes .wide + label {
    grid-column: 1;
}

.description {
    height: 50px;
    margin: 9px 0;
    border: 1px solid #7f9db9;
}

.btn {
    width: 72px;
    height: 21px;
    border: 1px solid #003c74;
    border-radius: 3px;
    background: linear-gradient(#fff, #f2f1ea 80%, #dcd8cc);
}

.btn.full {
    width: 100%;
}

.btn:disabled {
    color: #a8a698;
    border-color: #cac8bb;
    background: #f4f3ea;
}

.btn.default {
    box-shadow: inset 0 0 0 2px #9db9ea;
}

.actions {
    display: flex;
    justify-content: flex-end;
    gap: 9px;
    padding-top: 10px;
}

.btn.back {
    margin-right: -6px;
}

/* sheet tabs and status */
.sheet-tabs {
    display: flex;
    flex: none;
    height: 17px;
    border-top: 1px solid #aaa89a;
}

.tab-side {
    display: flex;
    flex: 1;
    border-right: 2px solid #000;
}

.nav {
    width: 16px;
}

.sheet-tab {
    position: relative;
    width: 64px;
    font: bold 12px/14px "DejaVu Sans Condensed", sans-serif;
}

.sheet-tab svg {
    position: absolute;
    top: 0;
    left: 0;
}

.sheet-tab span {
    position: relative;
}

.hscroll {
    display: flex;
    width: 391px;
}

.corner {
    width: 24px;
    border-left: 6px solid #ece9d8;
    background: linear-gradient(90deg, #000 1px, #ece9d8 1px);
}

.status {
    display: flex;
    align-items: center;
    flex: none;
    gap: 2px;
    height: 20px;
    padding: 2px 3px 1px 4px;
    border-top: 1px solid #fff;
}

.ready {
    flex: 1;
}

.pane {
    width: 26px;
    height: 16px;
    border: 1px solid #d8d4c0;
}

.pane.sum {
    width: 140px;
    padding-left: 34px;
}

/* task bar */
.taskbar {
    display: flex;
    align-items: stretch;
    flex: none;
    height: 30px;
    background: linear-gradient(#1f4fb8, #4590f5 2px, #2762de 7px, #245edb 24px, #1c46a8);
    color: #fff;
}

.start {
    width: 115px;
    gap: 6px;
    padding-right: 14px;
    border-radius: 0 10px 10px 0;
    background: linear-gradient(#2c8a2c, #62b562 3px, #3c983c 9px, #379637 22px, #226e22);
    font: italic bold 17px/20px "Noto Sans", sans-serif;
    text-shadow: 1px 1px 1px #14501a;
}

.tasks {
    display: flex;
    flex: 1;
    gap: 1px;
    padding: 3px 0 2px 10px;
}

.task {
    flex: 0 1 159px;
    justify-content: flex-start;
    gap: 4px;
    padding-left: 9px;
    border-radius: 3px;
    background: linear-gradient(#5a9bfb, #3c81f0 4px, #3878ea);
}

.task.current {
    background: linear-gradient(#16388e, #1e4fb8 4px, #1d4cb0);
}

.lang {
    align-self: center;
    margin-right: 22px;
}

.tray {
    display: flex;
    align-items: center;
    gap: 2px;
    width: 180px;
    border-left: 1px solid #0a3a98;
    background: linear-gradient(#0c6cd0, #1ca2f4 3px, #1290e8 9px, #1290e8 24px, #0a62b8);
}

.tray-toggle {
    margin-left: -10px;
}

.tray time {
    margin-left: 6px;
}
```
FILE: script.js
```js
var colA = ['1,18', '1,19', '1,2', '1,21', '1,22', '1,23', '1,24', '1,25', '1,26', '1,27', '1,28', '1,29', '1,3', '1,31', '1,32',
    '1,33', '1,34', '1,35', '1,36', '1,37', '1,38', '1,39', '1,4', '1,41', '1,42', '1,43', '1,44', '1,45', '1,46', '1,47'];
var colB = ['4,34995', '4,2522', '4,15445', '4,0567', '3,95894', '3,91007', '3,81232', '3,76344', '3,66569', '3,56794', '3,51906',
    '3,42131', '3,42131', '3,27468', '3,22581', '3,17693', '3,12805', '3,0303', '2,98143', '2,88368', '2,8348', '2,78592', '2,73705',
    '2,68817', '2,6393', '2,59042', '2,54154', '2,49267', '2,44379', '2,39492'];
var colE = ['', '0,033452', '0,067226', '0,083421', '0,099684', '0,108013', '0,124868', '0,133419', '0,150774', '0,168436', '0,17741',
    '0,210358', '0,210358', '0,231694', '0,24665', '0,301842', '0,317604', '0,349876', '0,366321', '0,400053', '0,417294', '0,445581',
    '0,463284', '0,481304', '0,499651', '0,518344', '0,537394', '0,55681', '0,576614', '0,596815'];

var grid = document.getElementById('grid');
var sheet = document.getElementById('sheet');
var edges = { C: 'before', D: 'sel first', E: 'sel last', F: 'after' };

function cell(letter, row) {
    var i = row - 3;
    var cls = edges[letter] || '';
    var text = '';
    if (row === 1 && letter === 'A') return '<td class="text">Δείγμα</td>';
    if (row === 1 && letter === 'B') return '<td class="text before" colspan="2"> Τάση ±25V_I/O-1</td>';
    if (row === 1 && letter === 'C') return '';
    if (row === 2 && letter === 'A') return '<td class="text" colspan="2">Χρόνος Ύ Τάση ±25V</td>';
    if (row === 2 && letter === 'B') return '';
    if (row === 1 && letter === 'D') cls += ' cursor';
    if (i >= 0) {
        if (letter === 'A') text = colA[i] || '';
        if (letter === 'B') text = colB[i] || '';
        if (letter === 'D' && i < colE.length) text = String(i / 100).replace('.', ',');
        if (letter === 'E') text = colE[i] || '';
    }
    return '<td class="' + cls + '">' + text + '</td>';
}

// enough rows and columns to fill the window
function drawGrid() {
    var cols = Math.min(26, Math.ceil((sheet.clientWidth - 26) / 64));
    var rows = Math.ceil((sheet.clientHeight - 17) / 17);
    var letters = 'ABCDEFGHIJKLMNOPQRSTUVWXYZ'.slice(0, cols).split('');
    // the last column is cut by the scroll bar, so its letter is left out
    var html = '<thead><tr><th></th>';
    letters.forEach(function (l, n) {
        html += '<th class="' + (l === 'D' || l === 'E' ? 'sel' : '') + '">' + (n < cols - 1 ? l : '') + '</th>';
    });
    html += '</tr></thead><tbody>';
    for (var r = 1; r <= rows; r++) {
        html += '<tr><th>' + r + '</th>';
        letters.forEach(function (l) {
            html += cell(l, r);
        });
        html += '</tr>';
    }
    grid.innerHTML = html + '</tbody>';
    grid.style.width = (26 + cols * 64) + 'px';
}

grid.innerHTML = '';
drawGrid();
window.addEventListener('resize', drawGrid);
```
